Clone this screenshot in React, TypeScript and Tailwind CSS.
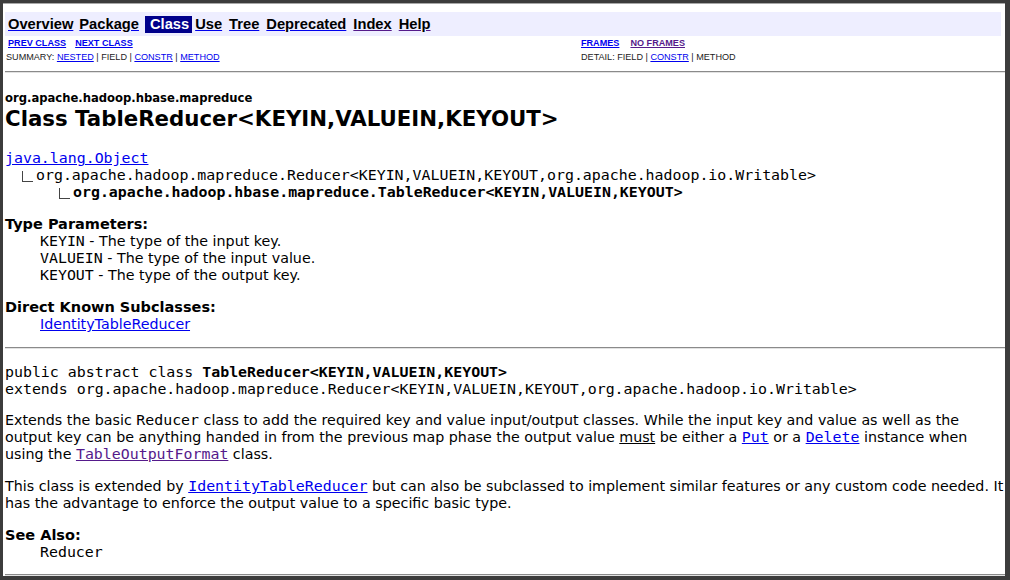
const mono = "font-['DejaVu_Sans_Mono',monospace] text-[14.9px]"
const link = 'text-[#0000ee] underline'
const visited = 'text-[#551a8b] underline'

function NavItem({ label, ml, deco }: { label: string; ml: string; deco: string }) {
  return <span className={`${ml} underline ${deco} text-black`}>{label}</span>
}

function TopNav() {
  return (
    <div className="font-['Liberation_Sans',Arial,sans-serif]">
      <div className="mt-[8px] mr-[4px] h-[24px] bg-[#eeeeff] pt-[4px] flex text-[14.7px] leading-[17px] font-bold">
        <NavItem label="Overview" ml="ml-[3px]" deco="decoration-[#0000ee]" />
        <NavItem label="Package" ml="ml-[6px]" deco="decoration-[#0000ee]" />
        <span className="ml-[6px] h-[17px] pl-[5px] pr-[3px] bg-[#00008b] text-white">Class</span>
        <NavItem label="Use" ml="ml-[3px]" deco="decoration-[#0000ee]" />
        <NavItem label="Tree" ml="ml-[7px]" deco="decoration-[#0000ee]" />
        <NavItem label="Deprecated" ml="ml-[7px]" deco="decoration-[#0000ee]" />
        <NavItem label="Index" ml="ml-[7px]" deco="decoration-[#551a8b]" />
        <NavItem label="Help" ml="ml-[7px]" deco="decoration-[#551a8b]" />
      </div>

      {/* prev/next + frames */}
      <div className="grid grid-cols-[576px_1fr] text-[9.1px] leading-[14px] text-[#222]">
        <div className="pl-[3px] font-bold">
          <span className={link}>PREV CLASS</span>
          <span className={`${link} ml-[9px]`}>NEXT CLASS</span>
        </div>
        <div className="font-bold">
          <span className={link}>FRAMES</span>
          <span className={`${visited} ml-[11px]`}>NO FRAMES</span>
        </div>
        <div className="pl-[1px]">
          SUMMARY: <span className={link}>NESTED</span> | FIELD | <span className={link}>CONSTR</span> |{' '}
          <span className={link}>METHOD</span>
        </div>
        <div>
          DETAIL: FIELD | <span className={link}>CONSTR</span> | METHOD
        </div>
      </div>
    </div>
  )
}

function Rule({ mt }: { mt: string }) {
  return <div className={`${mt} h-[2px] border-t border-b border-t-[#8a8a8a] border-b-[#e2e2e2]`} />
}

function Elbow() {
  return <span className="inline-block w-[11px] h-[11px] mr-[3px] border-l border-b border-[#444] align-[-2px]" />
}

export default function App() {
  return (
    <div className="w-[1010px] h-[580px] bg-[#3c3c3c] pt-[3px] pl-[3px] overflow-hidden">
      <div className="w-[1002px] h-[573px] bg-white border-t border-[#a8a8a8] pl-[2px] overflow-hidden font-['DejaVu_Sans',sans-serif] text-[14.25px] leading-[17px] text-black">
        <TopNav />
        <Rule mt="mt-[7px]" />

        {/* Title */}
        <div className="mt-[18px] text-[11.6px] leading-[14px] font-bold">org.apache.hadoop.hbase.mapreduce</div>
        <h2 className="mt-[2px] text-[21.3px] leading-[24px] font-bold">Class TableReducer&lt;KEYIN,VALUEIN,KEYOUT&gt;</h2>

        {/* Inheritance tree */}
        <div className={`mt-[19px] ${mono} leading-[17px] whitespace-nowrap`}>
          <div className={link}>java.lang.Object</div>
          <div className="pl-[17px]">
            <Elbow />
            org.apache.hadoop.mapreduce.Reducer&lt;KEYIN,VALUEIN,KEYOUT,org.apache.hadoop.io.Writable&gt;
          </div>
          <div className="pl-[54px] font-bold">
            <Elbow />
            org.apache.hadoop.hbase.mapreduce.TableReducer&lt;KEYIN,VALUEIN,KEYOUT&gt;
          </div>
        </div>

        {/* Type parameters */}
        <dl className="mt-[15px]">
          <dt className="font-bold text-[14.5px]">Type Parameters:</dt>
          <dd className="ml-[35px]"><code className={mono}>KEYIN</code> - The type of the input key.</dd>
          <dd className="ml-[35px]"><code className={mono}>VALUEIN</code> - The type of the input value.</dd>
          <dd className="ml-[35px]"><code className={mono}>KEYOUT</code> - The type of the output key.</dd>
        </dl>

        <dl className="mt-[15px]">
          <dt className="font-bold text-[14.5px]">Direct Known Subclasses:</dt>
          <dd className="ml-[35px]"><span className={link}>IdentityTableReducer</span></dd>
        </dl>

        <Rule mt="mt-[14px]" />

        {/* Declaration */}
        <div className={`mt-[15px] ${mono} leading-[17px] whitespace-nowrap`}>
          <div>public abstract class <b>TableReducer&lt;KEYIN,VALUEIN,KEYOUT&gt;</b></div>
          <div>extends org.apache.hadoop.mapreduce.Reducer&lt;KEYIN,VALUEIN,KEYOUT,org.apache.hadoop.io.Writable&gt;</div>
        </div>

        <p className="mt-[14px] whitespace-nowrap">
          Extends the basic <code className={mono}>Reducer</code> class to add the required key and value input/output classes. While the input key and value as well as the
          <br />
          output key can be anything handed in from the previous map phase the output value <u>must</u> be either a{' '}
          <code className={`${mono} ${link}`}>Put</code> or a <code className={`${mono} ${link}`}>Delete</code> instance when
          <br />
          using the <code className={`${mono} ${visited}`}>TableOutputFormat</code> class.
        </p>

        <p className="mt-[15px] whitespace-nowrap">
          This class is extended by <code className={`${mono} ${link}`}>IdentityTableReducer</code> but can also be subclassed to implement similar features or any custom code needed. It
          <br />
          has the advantage to enforce the output value to a specific basic type.
        </p>

        <dl className="mt-[15px]">
          <dt className="font-bold text-[14.5px]">See Also:</dt>
          <dd className="ml-[35px]"><code className={mono}>Reducer</code></dd>
        </dl>

        <Rule mt="mt-[13px]" />
      </div>
    </div>
  )
}
